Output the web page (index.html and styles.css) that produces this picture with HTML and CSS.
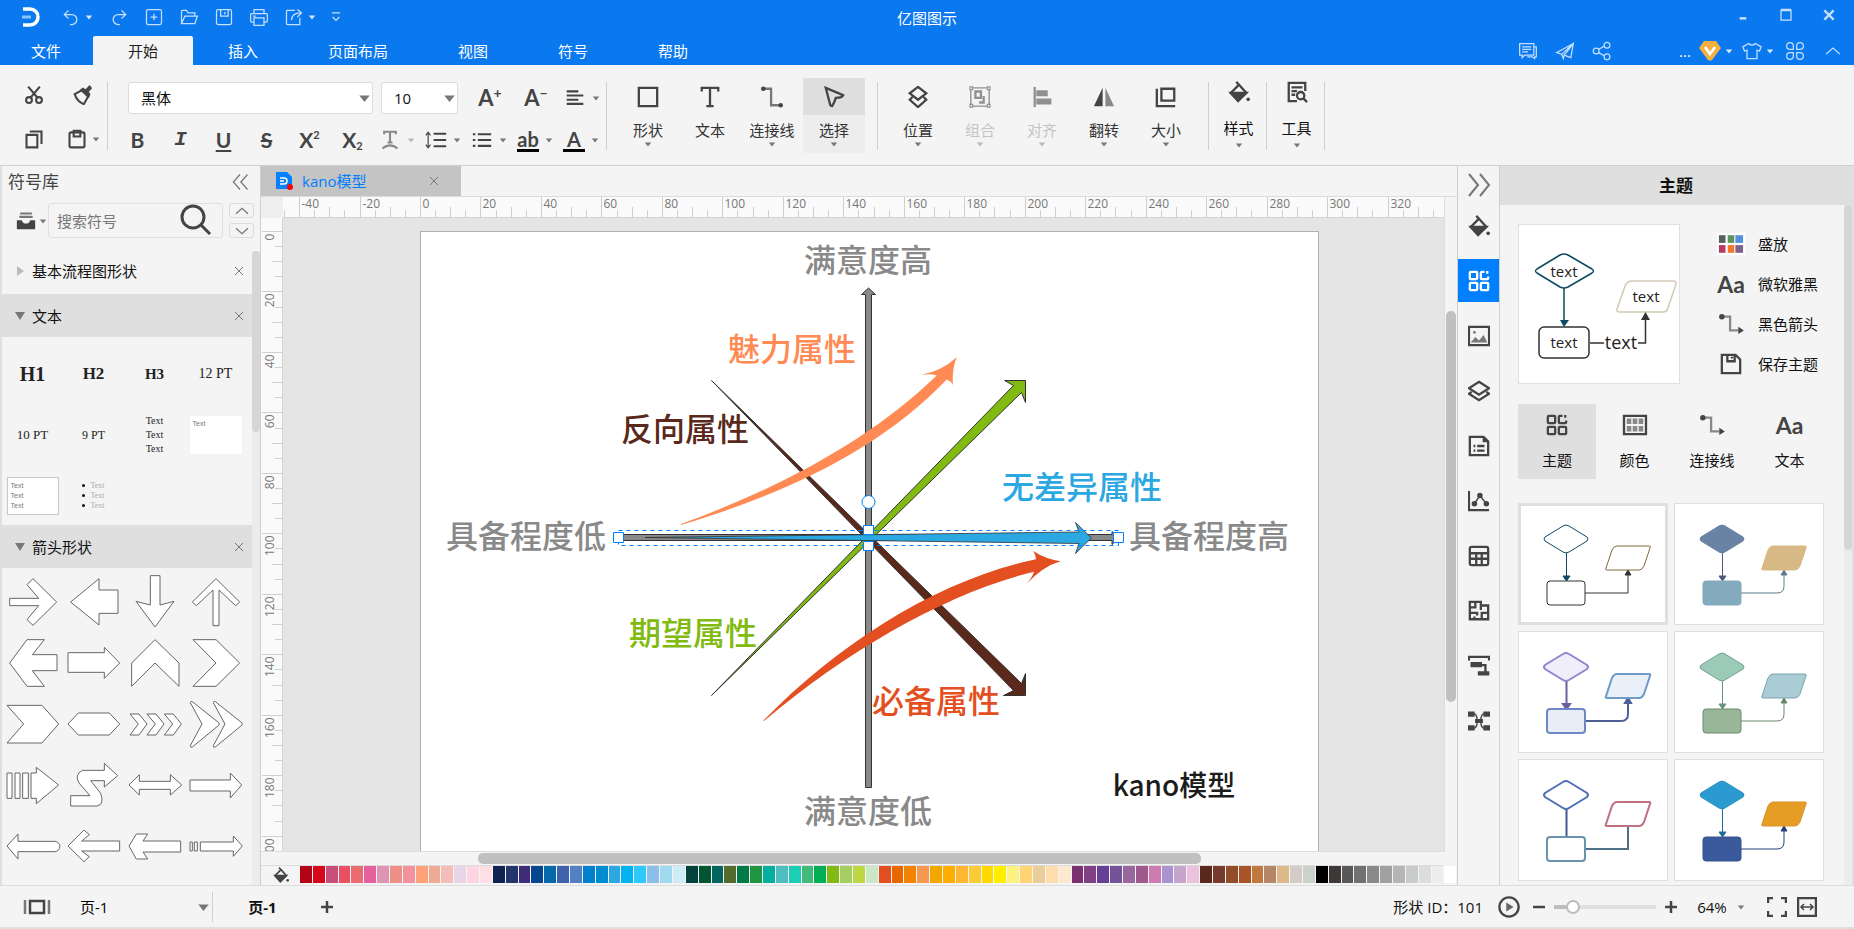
FILE: index.html
```html
<!DOCTYPE html>
<html lang="zh-CN">
<head>
  <meta charset="UTF-8" />
  <meta name="viewport" content="width=device-width, initial-scale=1" />
  <title>亿图图示</title>
  <link rel="stylesheet" href="styles.css">
</head>
<body>
  <!-- icon sprite -->
  <svg class="sprite" aria-hidden="true">
    <defs>
      <symbol id="i-caret" viewBox="0 0 10 10"><path d="M1 3h8L5 8z" fill="currentColor"/></symbol>
      <symbol id="i-close" viewBox="0 0 12 12"><path d="M2 2l8 8M10 2l-8 8"/></symbol>
      <symbol id="i-undo" viewBox="0 0 24 24"><path d="M9 4L4 9l5 5M4 9h9a6 6 0 0 1 0 12h-2"/></symbol>
      <symbol id="i-redo" viewBox="0 0 24 24"><path d="M15 4l5 5-5 5M20 9h-9a6 6 0 0 0 0 12h2"/></symbol>
      <symbol id="i-new" viewBox="0 0 24 24"><rect x="3" y="3" width="18" height="18" rx="2"/><path d="M12 8v8M8 12h8"/></symbol>
      <symbol id="i-open" viewBox="0 0 24 24"><path d="M3 20V5q0-1 1-1h5l2 3h8v4M3 20l4-9h15l-3 9z"/></symbol>
      <symbol id="i-save" viewBox="0 0 24 24"><rect x="3" y="3" width="18" height="18" rx="2"/><path d="M8 3v8h9V3M13 6v3"/></symbol>
      <symbol id="i-print" viewBox="0 0 24 24"><path d="M6 8V3h12v5M6 18H3q-1 0-1-1V9q0-1 1-1h18q1 0 1 1v8q0 1-1 1h-3M6 13h12v9H6zM5 11h3"/></symbol>
      <symbol id="i-export" viewBox="0 0 24 24"><path d="M13 4H4q-1 0-1 1v15q0 1 1 1h15v-8M9 16c0-6 4-9 11-9M16 3l5 4-5 5"/></symbol>
      <symbol id="i-more" viewBox="0 0 24 24"><path d="M7 7h10M8 12l4 4 4-4"/></symbol>
      <symbol id="i-min" viewBox="0 0 24 24"><path d="M8 16h8" stroke-width="3"/></symbol>
      <symbol id="i-max" viewBox="0 0 24 24"><path d="M6 6h12v12H6z"/><path d="M6 6h12" stroke-width="3"/></symbol>
      <symbol id="i-chat" viewBox="0 0 24 24"><path d="M2 3h17v14H8l-3 3v-3H2zM5 7h11M5 10h11M5 13h7M19 7h3v12h-2v2l-3-2h-6"/></symbol>
      <symbol id="i-plane" viewBox="0 0 24 24"><path d="M22 3L2 14l6 2L22 3l-3 17-8-3-1 4-2-5M11 17L22 3"/></symbol>
      <symbol id="i-share" viewBox="0 0 24 24"><circle cx="5" cy="12" r="3.500"/><circle cx="18" cy="5" r="3.500"/><circle cx="18" cy="19" r="3.500"/><path d="M8 10l7-4M8 14l7 4"/></symbol>
      <symbol id="i-shirt" viewBox="0 0 24 24"><path d="M8 3L1 7l2 5 3-1v10h12V11l3 1 2-5-7-4q-4 4-8 0z"/></symbol>
      <symbol id="i-petals" viewBox="0 0 24 24"><path d="M10 10H6a4 4 0 1 1 4-4zM14 10V6a4 4 0 1 1 4 4zM10 14v4a4 4 0 1 1-4-4zM14 14h4a4 4 0 1 1-4 4z"/></symbol>
      <symbol id="i-up" viewBox="0 0 24 24"><path d="M3 16l9-8 9 8"/></symbol>
      <symbol id="i-down" viewBox="0 0 24 24"><path d="M3 8l9 8 9-8"/></symbol>
      <symbol id="i-left2" viewBox="0 0 24 24"><path d="M12 3l-8 9 8 9M21 3l-8 9 8 9"/></symbol>
      <symbol id="i-right2" viewBox="0 0 24 24"><path d="M2 1l9 11-9 11M13 1l9 11-9 11"/></symbol>

      <symbol id="i-cut" viewBox="0 0 24 24"><circle cx="6" cy="18" r="3.500"/><circle cx="18" cy="18" r="3.500"/><path d="M5 2l11 13M19 2L8 15"/></symbol>
      <symbol id="i-brush" viewBox="0 0 24 24"><path d="M2 11l9-5 7 8-5 9q-8-3-11-12z"/><path d="M8 6l11 10 2-5-2-3 4-4-3-4-5 5-3-2z" fill="currentColor" stroke="none"/></symbol>
      <symbol id="i-copy" viewBox="0 0 24 24"><path d="M3 7h13v15H3z"/><path d="M7 3h14v15"/></symbol>
      <symbol id="i-paste" viewBox="0 0 24 24"><rect x="3" y="4" width="18" height="18" rx="2"/><path d="M8 2h8v7H8z"/></symbol>
      <symbol id="i-alignleft" viewBox="0 0 24 24"><path d="M2 4h14M2 9h20M2 14h14M2 19h20"/></symbol>
      <symbol id="i-spacing" viewBox="0 0 28 24"><path d="M11 4h16M11 12h16M11 20h16"/><path d="M4 2v20M1 6l3-4 3 4M1 18l3 4 3-4" stroke-width="1.500"/></symbol>
      <symbol id="i-bullets" viewBox="0 0 24 24"><path d="M7 5h16M7 12h16M7 19h16M1 5h3M1 12h3M1 19h3"/></symbol>
      <symbol id="i-shape" viewBox="0 0 24 24"><path d="M2 2h20v20H2z"/></symbol>
      <symbol id="i-text" viewBox="0 0 24 24"><path d="M3 6V2h18v4M12 2v20M8 22h8"/></symbol>
      <symbol id="i-line" viewBox="0 0 24 24"><path d="M3 3h8v18h10" stroke="#777"/><circle cx="2.500" cy="3" r="2.500" fill="currentColor" stroke="none"/><circle cx="21.500" cy="21" r="2.500" fill="currentColor" stroke="none"/></symbol>
      <symbol id="i-pointer" viewBox="0 0 24 24"><path d="M3 2l19 8q-1 3-8 3-2 6-4 9-1 0-2-1z"/></symbol>
      <symbol id="i-position" viewBox="0 0 24 24"><path d="M12 1l9 7-9 7-9-7zM6 12l-3 3 9 8 9-8-3-3"/></symbol>
      <symbol id="i-group" viewBox="0 0 24 24"><path d="M2 2h20v20H2z" stroke-width="1.500"/><path d="M1 1h3v3H1zM20 1h3v3h-3zM1 20h3v3H1zM20 20h3v3h-3z" fill="#f4f4f4" stroke-width="1.200"/><path d="M7 6h6v7H7zM16 11v7h-5"/></symbol>
      <symbol id="i-align" viewBox="0 0 24 24"><path d="M4 1v22"/><path d="M7 6h10v4H7zM7 15h14v4H7z" fill="currentColor"/></symbol>
      <symbol id="i-flip" viewBox="0 0 24 24"><path d="M10.500 2v20H1z" fill="currentColor" stroke="none"/><path d="M13.500 2v20H23z" fill="#888" stroke="none"/></symbol>
      <symbol id="i-size" viewBox="0 0 24 24"><path d="M7 3h14v13H7zM2 3v19h20"/></symbol>
      <symbol id="i-bucket" viewBox="0 0 24 24"><path d="M9 1l3 3-9 9 8 8 9-8-8-9"/><path d="M3 13h17l-9 9z" fill="currentColor"/><circle cx="22" cy="20" r="2" fill="currentColor" stroke="none"/></symbol>
      <symbol id="i-tools" viewBox="0 0 24 24"><path d="M12 22H3V2h18v9M6 7h12M6 11h6M6 15h4"/><circle cx="16" cy="16" r="4"/><path d="M19 19l4 4"/></symbol>
      <symbol id="i-library" viewBox="0 0 24 24"><path d="M5 3h14M4 7h16" stroke="#777"/><path d="M1 11h6q1 4 5 4t5-4h6v11H1z" fill="currentColor" stroke="none"/></symbol>
      <symbol id="i-search" viewBox="0 0 32 32"><circle cx="13" cy="13" r="11"/><path d="M21 21l9 9"/></symbol>

      <symbol id="i-theme" viewBox="0 0 24 24"><rect x="2" y="2" width="8" height="8" rx="1"/><path d="M18 2h-3q-1 0-1 1v6q0 1 1 1h6q1 0 1-1V7M21 1v3"/><rect x="2" y="14" width="8" height="8" rx="1"/><rect x="14" y="14" width="8" height="8" rx="1"/></symbol>
      <symbol id="i-image" viewBox="0 0 24 24"><path d="M1 2h22v20H1z"/><path d="M3 19l5-6 4 4 5-6 4 8z" fill="#777" stroke="none"/><circle cx="7" cy="8" r="1.500" fill="#777" stroke="none"/></symbol>
      <symbol id="i-layers" viewBox="0 0 24 24"><path d="M12 2l11 7-11 7L1 9zM4 13l-3 2 11 7 11-7-3-2"/></symbol>
      <symbol id="i-doc" viewBox="0 0 24 24"><path d="M2 2h15l5 5v15H2zM10 12h8M10 17h8M6 12h2M6 17h2"/><path d="M16 2v6h6z" fill="currentColor" stroke="none"/></symbol>
      <symbol id="i-chart" viewBox="0 0 24 24"><path d="M1 1v21h22"/><path d="M7 15l6-9 7 9" stroke-width="1.500"/><g fill="currentColor" stroke="none"><circle cx="7" cy="15" r="3"/><circle cx="13" cy="6" r="3"/><circle cx="20" cy="15" r="3"/></g></symbol>
      <symbol id="i-table" viewBox="0 0 24 24"><rect x="2" y="2" width="20" height="20" rx="2"/><path d="M2 9h20M2 15h20M9 9v13M15 9v13"/></symbol>
      <symbol id="i-plan" viewBox="0 0 24 24"><path d="M2 2h12v4h8v15H2zM8 2v6H2M14 6v5M2 14h8v3M7 21v-3M15 21v-7h7"/></symbol>
      <symbol id="i-gantt" viewBox="0 0 24 24"><path d="M1 6V2h22v4M14 11h5v9"/><path d="M4 9h10v3H4zM12 19h10v2H12z" fill="currentColor"/></symbol>
      <symbol id="i-mind" viewBox="0 0 24 24"><path d="M6 4q4 0 4 8t-4 8M18 4q-4 0-4 8t4 8M8 12h8" stroke-width="1.500"/><path d="M1 3h5v3H1zM18 3h5v3h-5zM1 18h5v3H1zM18 18h5v3h-5zM9 11h6v2H9z" fill="currentColor"/></symbol>
      <symbol id="i-arrowline" viewBox="0 0 28 24"><path d="M4 4h9v15h9" stroke="#888"/><circle cx="4" cy="4" r="3" fill="currentColor" stroke="none"/><path d="M22 15l6 4-6 4z" fill="currentColor" stroke="none"/></symbol>
      <symbol id="i-palette" viewBox="0 0 28 24"><path d="M2 2h24v20H2z"/><path d="M5 5h5v6H5zM11.500 5h5v6h-5zM18 5h5v6h-5zM5 13h5v6H5zM11.500 13h5v6h-5zM18 13h5v6h-5z" fill="#888" stroke="none"/></symbol>
      <symbol id="i-disk" viewBox="0 0 24 24"><path d="M2 2h15l5 5v15H2zM8 2v7h8V2M13 4v2"/></symbol>
      <symbol id="i-swatch" viewBox="0 0 26 20"><path fill="#fff" stroke="none" d="M0 0h26v20H0z"/><g stroke="none"><path fill="#566061" d="M2 2h6v7H2z"/><path fill="#5c9561" d="M10 2h6v7h-6z"/><path fill="#5290dc" d="M17 2h7v7h-7z"/><path fill="#b43c64" d="M2 11h6v7H2z"/><path fill="#f5782e" d="M10 11h6v7h-6z"/><path fill="#7d6189" d="M17 11h7v7h-7z"/></g></symbol>
      <symbol id="i-pages" viewBox="0 0 28 16"><path d="M7 2h14v12H7z" stroke-width="2.500"/><path d="M2 1v14M26 1v14" stroke="#777"/></symbol>
      <symbol id="i-play" viewBox="0 0 24 24"><circle cx="12" cy="12" r="10.500"/><path d="M9 7l8 5-8 5z" fill="#666" stroke="none"/></symbol>
      <symbol id="i-plus" viewBox="0 0 14 14"><path d="M7 1v12M1 7h12"/></symbol>
      <symbol id="i-minus" viewBox="0 0 14 14"><path d="M1 7h12"/></symbol>
      <symbol id="i-full" viewBox="0 0 20 20"><path d="M1 6V1h5M14 1h5v5M19 14v5h-5M6 19H1v-5"/></symbol>
      <symbol id="i-fit" viewBox="0 0 20 20"><path d="M1 1h18v18H1z"/><path d="M4 10h12M7 7l-3 3 3 3M13 7l3 3-3 3" stroke-width="1.500"/></symbol>
    </defs>
  </svg>

  <header class="titlebar">
    <div class="title-row">
      <div class="quick">
        <svg class="logo" viewBox="0 0 18 20"><path d="M1 2h7a8 8 0 0 1 0 16H1" fill="none" stroke="#fff" stroke-width="3.500"/><path d="M0 10h9" stroke="#8cc4ff" stroke-width="3"/></svg>
        <button class="q-drop" aria-label="撤销"><svg class="icon"><use href="#i-undo"/></svg><svg class="caret"><use href="#i-caret"/></svg></button>
        <button class="q-btn" aria-label="重做"><svg class="icon"><use href="#i-redo"/></svg></button>
        <button class="q-btn" aria-label="新建"><svg class="icon"><use href="#i-new"/></svg></button>
        <button class="q-btn" aria-label="打开"><svg class="icon"><use href="#i-open"/></svg></button>
        <button class="q-btn" aria-label="保存"><svg class="icon"><use href="#i-save"/></svg></button>
        <button class="q-btn" aria-label="打印"><svg class="icon"><use href="#i-print"/></svg></button>
        <button class="q-drop" aria-label="导出"><svg class="icon"><use href="#i-export"/></svg><svg class="caret"><use href="#i-caret"/></svg></button>
        <button class="q-more" aria-label="更多"><svg class="icon"><use href="#i-more"/></svg></button>
      </div>
      <div class="app-title">亿图图示</div>
      <div class="window-btns">
        <button aria-label="最小化"><svg class="icon"><use href="#i-min"/></svg></button>
        <button aria-label="最大化"><svg class="icon"><use href="#i-max"/></svg></button>
        <button aria-label="关闭"><svg class="icon small"><use href="#i-close"/></svg></button>
      </div>
    </div>
    <div class="tab-row">
      <nav class="menu">
        <a href="#" class="file">文件</a>
        <a href="#" class="active">开始</a>
        <a href="#">插入</a>
        <a href="#">页面布局</a>
        <a href="#">视图</a>
        <a href="#">符号</a>
        <a href="#">帮助</a>
      </nav>
      <div class="account">
        <button class="a-btn" aria-label="评论"><svg class="icon"><use href="#i-chat"/></svg></button>
        <button class="a-btn" aria-label="发送"><svg class="icon"><use href="#i-plane"/></svg></button>
        <button class="a-btn" aria-label="分享"><svg class="icon"><use href="#i-share"/></svg></button>
        <span class="user">...</span>
        <button class="a-drop" aria-label="会员"><svg class="vip" viewBox="0 0 22 20"><path d="M5 0h12l5 7-9 12q-2 1.500-4 0L0 7z" fill="#f5b041"/><path d="M6 6l5 7 5-7" fill="none" stroke="#fff" stroke-width="2.500"/></svg><svg class="caret"><use href="#i-caret"/></svg></button>
        <button class="a-drop" aria-label="皮肤"><svg class="icon"><use href="#i-shirt"/></svg><svg class="caret"><use href="#i-caret"/></svg></button>
        <button class="a-apps" aria-label="应用"><svg class="icon"><use href="#i-petals"/></svg></button>
        <button class="a-up" aria-label="收起"><svg class="icon"><use href="#i-up"/></svg></button>
      </div>
    </div>
  </header>

  <div class="ribbon">
    <div class="group clipboard">
      <button class="tool" aria-label="剪切"><svg class="icon"><use href="#i-cut"/></svg></button>
      <button class="tool" aria-label="格式刷"><svg class="icon"><use href="#i-brush"/></svg></button>
      <button class="tool" aria-label="复制"><svg class="icon"><use href="#i-copy"/></svg></button>
      <button class="tool paste" aria-label="粘贴"><svg class="icon"><use href="#i-paste"/></svg><svg class="caret"><use href="#i-caret"/></svg></button>
    </div>
    <div class="group font">
      <div class="font-row first">
        <label class="pick family"><select aria-label="字体"><option>黑体</option></select><svg class="pick-caret"><use href="#i-caret"/></svg></label>
        <label class="pick size"><select aria-label="字号"><option>10</option></select><svg class="pick-caret"><use href="#i-caret"/></svg></label>
        <button class="drop glyph-a">A<sup>+</sup></button>
        <button class="drop glyph-a">A<sup>−</sup></button>
        <button class="drop" aria-label="对齐"><svg class="icon"><use href="#i-alignleft"/></svg><svg class="caret"><use href="#i-caret"/></svg></button>
      </div>
      <div class="font-row">
        <button class="fmt bold">B</button>
        <button class="fmt italic">I</button>
        <button class="fmt under">U</button>
        <button class="fmt strike">S</button>
        <button class="fmt">X<sup>2</sup></button>
        <button class="fmt">X<sub>2</sub></button>
        <button class="drop off" aria-label="文字效果"><svg class="icon" viewBox="0 0 24 24"><path d="M5 5V2h14v3M12 2v13M9 15h6M3 22q9-7 18 0"/></svg><svg class="caret"><use href="#i-caret"/></svg></button>
        <button class="drop" aria-label="行距"><svg class="icon"><use href="#i-spacing"/></svg><svg class="caret"><use href="#i-caret"/></svg></button>
        <button class="drop" aria-label="项目符号"><svg class="icon"><use href="#i-bullets"/></svg><svg class="caret"><use href="#i-caret"/></svg></button>
        <button class="drop"><span class="ink">ab</span><svg class="caret"><use href="#i-caret"/></svg></button>
        <button class="drop"><span class="ink">A</span><svg class="caret"><use href="#i-caret"/></svg></button>
      </div>
    </div>
    <div class="group insert">
      <button class="big"><span class="pic"><svg class="icon"><use href="#i-shape"/></svg></span>形状<svg class="caret"><use href="#i-caret"/></svg></button>
      <button class="big"><span class="pic"><svg class="icon"><use href="#i-text"/></svg></span>文本</button>
      <button class="big"><span class="pic"><svg class="icon"><use href="#i-line"/></svg></span>连接线<svg class="caret"><use href="#i-caret"/></svg></button>
      <button class="big active"><span class="pic"><svg class="icon"><use href="#i-pointer"/></svg></span>选择<svg class="caret"><use href="#i-caret"/></svg></button>
    </div>
    <div class="group arrange">
      <button class="big"><span class="pic"><svg class="icon"><use href="#i-position"/></svg></span>位置<svg class="caret"><use href="#i-caret"/></svg></button>
      <button class="big off"><span class="pic"><svg class="icon"><use href="#i-group"/></svg></span>组合<svg class="caret"><use href="#i-caret"/></svg></button>
      <button class="big off"><span class="pic"><svg class="icon"><use href="#i-align"/></svg></span>对齐<svg class="caret"><use href="#i-caret"/></svg></button>
      <button class="big"><span class="pic"><svg class="icon"><use href="#i-flip"/></svg></span>翻转<svg class="caret"><use href="#i-caret"/></svg></button>
      <button class="big"><span class="pic"><svg class="icon"><use href="#i-size"/></svg></span>大小<svg class="caret"><use href="#i-caret"/></svg></button>
    </div>
    <div class="group single">
      <button class="big"><span class="pic"><svg class="icon"><use href="#i-bucket"/></svg></span>样式<svg class="caret"><use href="#i-caret"/></svg></button>
    </div>
    <div class="group single">
      <button class="big"><span class="pic"><svg class="icon"><use href="#i-tools"/></svg></span>工具<svg class="caret"><use href="#i-caret"/></svg></button>
    </div>
  </div>

  <main class="workspace">
    <aside class="library">
      <div class="lib-head">符号库<button aria-label="收起"><svg class="icon"><use href="#i-left2"/></svg></button></div>
      <div class="lib-search">
        <button class="lib-menu" aria-label="符号库菜单"><svg class="icon"><use href="#i-library"/></svg><svg class="caret"><use href="#i-caret"/></svg></button>
        <label class="search"><input type="text" placeholder="搜索符号" aria-label="搜索符号"><svg class="magnifier"><use href="#i-search"/></svg></label>
        <div class="steps">
          <button aria-label="上移"><svg><use href="#i-up"/></svg></button>
          <button aria-label="下移"><svg><use href="#i-down"/></svg></button>
        </div>
      </div>
      <div class="lib-body">
        <div class="lib-list">
          <div class="section closed"><svg class="tri" viewBox="0 0 10 10"><path d="M2 0l7 5-7 5z"/></svg>基本流程图形状<button aria-label="关闭"><svg><use href="#i-close"/></svg></button></div>
          <div class="section"><svg class="tri" viewBox="0 0 10 10"><path d="M0 1h10L5 9z"/></svg>文本<button aria-label="关闭"><svg><use href="#i-close"/></svg></button></div>
          <div class="shapes text-shapes">
            <div class="h1">H1</div>
            <div class="h2">H2</div>
            <div class="h3">H3</div>
            <div class="pt12">12 PT</div>
            <div class="pt10">10 PT</div>
            <div class="pt9">9 PT</div>
            <div class="lines">Text<br>Text<br>Text</div>
            <div><span class="note">Text</span></div>
            <div><span class="note framed">Text<br>Text<br>Text</span></div>
            <div><ul class="dots"><li>Text</li><li>Text</li><li>Text</li></ul></div>
          </div>
          <div class="section"><svg class="tri" viewBox="0 0 10 10"><path d="M0 1h10L5 9z"/></svg>箭头形状<button aria-label="关闭"><svg><use href="#i-close"/></svg></button></div>
          <div class="shapes arrow-shapes" id="arrows"></div>
        </div>
        <div class="lib-scroll"><div class="thumb"></div></div>
      </div>
    </aside>

    <section class="editor">
      <div class="doc-tabs">
        <div class="doc-tab">
          <svg class="doc-icon" viewBox="0 0 18 18"><path d="M1 0h10l5 5v12H1q-1 0-1-1V1q0-1 1-1z" fill="#007fff"/><path d="M4 6h4a3 3 0 0 1 0 6H4M4 9h4" fill="none" stroke="#fff" stroke-width="1.500"/><circle cx="14" cy="15" r="3" fill="#f00"/></svg>
          <a href="#">kano模型</a>
          <button aria-label="关闭"><svg><use href="#i-close"/></svg></button>
        </div>
      </div>
      <div class="stage">
        <div class="corner"></div>
        <svg class="ruler-h" id="rulerH"></svg>
        <svg class="ruler-v" id="rulerV"></svg>
        <div class="canvas">
          <div class="page">
            <svg class="diagram" viewBox="421 232 897 1268" width="897" height="1268">
              <g stroke="#333" fill="#898989">
                <path d="M865.500 787.500V294.500h-4l7-6.500 7 6.500h-4v493z"/>
                <path d="M620 534.500h492v-3l7 6.500-7 6.500v-4H620z"/>
                <path fill="#5a291b" d="M711.500 380.500L1021.500 683.500l4-10v22h-22l10-5z"/>
                <path fill="#81ba10" d="M711.500 695.500L1013.500 385.500l-9-5h21v22l-4-10z"/>
                <path fill="#2ba7e2" d="M645 537.500L1079 532l-3.500-9.500 16 15.500-16 15.500 3.500-10z" stroke-width=".8"/>
              </g>
              <path fill="#ff8a53" d="M681 524C780 488 870 440 936.700 375.500q-5-2-15.700-.8 20-3 35.700-17.400-5 12-3.700 27.700-2-4-6.300-5.500C880 449 790 492 681 525z"/>
              <path fill="#e34f20" d="M763.500 720.500C840 642 940 579 1036 559.300q0-4-2.700-8.300 12 8 27.400 10.300-18 5-34.400 23 6-7 7.700-12.600C950 592 850 648 764 721z"/>
              <g class="labels" text-anchor="middle">
                <text x="868" y="272" fill="#898989">满意度高</text>
                <text x="868" y="823" fill="#898989">满意度低</text>
                <text x="526" y="548" fill="#898989">具备程度低</text>
                <text x="1209" y="548" fill="#898989">具备程度高</text>
                <text x="792" y="361" fill="#ff8a53">魅力属性</text>
                <text x="685" y="441" fill="#5a291b">反向属性</text>
                <text x="1082" y="499" fill="#2ba7e2">无差异属性</text>
                <text x="693" y="645" fill="#81ba10">期望属性</text>
                <text x="936" y="713" fill="#e34f20">必备属性</text>
                <text x="1174" y="796" fill="#1c1c1c" class="name">kano模型</text>
              </g>
              <g stroke="#0080ff" fill="#fff">
                <path d="M618.500 530.500h500v15h-500z" fill="none" stroke-dasharray="4 4"/>
                <path d="M613.500 532.500h10v10h-10zM1113.500 532.500h10v10h-10zM863.500 525.500h10v9h-10zM863.500 541.500h10v9h-10z"/>
                <circle cx="868.500" cy="502" r="6.500"/>
              </g>
            </svg>
          </div>
        </div>
      </div>
      <div class="v-scroll"><div class="thumb"></div></div>
      <div class="h-scroll"><div class="thumb"></div></div>
      <div class="colors">
        <button class="fill-btn" aria-label="填充"><svg class="icon"><use href="#i-bucket"/></svg></button>
        <div class="swatches" id="swatches"></div>
      </div>
    </section>

    <nav class="dock">
      <button class="fold" aria-label="收起"><svg class="icon"><use href="#i-right2"/></svg></button>
      <button aria-label="填充"><svg class="icon"><use href="#i-bucket"/></svg></button>
      <button class="active" aria-label="主题"><svg class="icon"><use href="#i-theme"/></svg></button>
      <button aria-label="图片"><svg class="icon"><use href="#i-image"/></svg></button>
      <button aria-label="图层"><svg class="icon"><use href="#i-layers"/></svg></button>
      <button aria-label="备注"><svg class="icon"><use href="#i-doc"/></svg></button>
      <button aria-label="图表"><svg class="icon"><use href="#i-chart"/></svg></button>
      <button aria-label="表格"><svg class="icon"><use href="#i-table"/></svg></button>
      <button aria-label="平面图"><svg class="icon"><use href="#i-plan"/></svg></button>
      <button aria-label="甘特图"><svg class="icon"><use href="#i-gantt"/></svg></button>
      <button aria-label="思维导图"><svg class="icon"><use href="#i-mind"/></svg></button>
    </nav>

    <aside class="themes">
      <h2>主题</h2>
      <div class="themes-body">
        <div class="themes-main">
          <div class="current">
            <svg class="preview" viewBox="0 0 160 158">
              <g fill="none" stroke-width="1.500">
                <path stroke="#0d4a63" d="M41 30q4-2 8 0l24 14q3 2 0 4L49 62q-4 2-8 0L18 48q-3-2 0-4z"/>
                <path stroke="#0d4a63" d="M45 63v32"/>
                <rect stroke="#333" x="20" y="102" width="50" height="31" rx="5"/>
                <path stroke="#d3c9b6" d="M113 56h41q4 0 3 3l-8 24q-1 4-5 4h-43q-4 0-3-3l8-23q2-5 7-5z"/>
                <path stroke="#333" d="M71 118h14M119 118h7.500V94"/>
              </g>
              <path fill="#0d4a63" d="M41 95h9l-5 7z"/>
              <path fill="#333" d="M122 95h9l-4.500-8z"/>
              <g font-size="15" text-anchor="middle" fill="#222">
                <text x="45" y="52">text</text>
                <text x="127" y="77">text</text>
                <text x="45" y="123">text</text>
                <text x="102" y="124" font-size="18">text</text>
              </g>
            </svg>
            <div class="options">
              <button><svg class="icon"><use href="#i-swatch"/></svg>盛放</button>
              <button><span class="aa">Aa</span>微软雅黑</button>
              <button><svg class="icon"><use href="#i-arrowline"/></svg>黑色箭头</button>
              <button><svg class="icon disk"><use href="#i-disk"/></svg>保存主题</button>
            </div>
          </div>
          <div class="kinds">
            <button class="active"><svg class="icon"><use href="#i-theme"/></svg>主题</button>
            <button><svg class="icon"><use href="#i-palette"/></svg>颜色</button>
            <button><svg class="icon"><use href="#i-arrowline"/></svg>连接线</button>
            <button><span class="aa">Aa</span>文本</button>
          </div>
          <div class="cards" id="cards"></div>
        </div>
        <div class="themes-scroll"><div class="thumb"></div></div>
      </div>
    </aside>
  </main>

  <footer class="status">
    <button class="s-pages" aria-label="页面"><svg><use href="#i-pages"/></svg></button>
    <label class="page-pick"><select aria-label="页"><option>页-1</option></select><svg class="pick-caret"><use href="#i-caret"/></svg></label>
    <a href="#" class="page-tab">页-1</a>
    <button class="s-icon" aria-label="添加页"><svg><use href="#i-plus"/></svg></button>
    <span class="shape-id">形状 ID：101</span>
    <button class="s-play" aria-label="播放"><svg><use href="#i-play"/></svg></button>
    <button class="s-icon" aria-label="缩小"><svg><use href="#i-minus"/></svg></button>
    <input type="range" class="zoom" min="0" max="100" value="14" aria-label="缩放">
    <button class="s-icon" aria-label="放大"><svg><use href="#i-plus"/></svg></button>
    <button class="percent">64%<svg class="caret"><use href="#i-caret"/></svg></button>
    <button class="s-fit" aria-label="全屏"><svg><use href="#i-full"/></svg></button>
    <button class="s-fit" aria-label="适应宽度"><svg><use href="#i-fit"/></svg></button>
  </footer>

  <script src="app.js"></script>
</body>
</html>
```

FILE: styles.css
```css
* {
  box-sizing: border-box;
}
body {
  margin: 0;
  height: 100vh;
  display: flex;
  flex-direction: column;
  overflow: hidden;
  font-family: "Open Sans", "Noto Sans CJK SC", sans-serif;
  font-size: 15px;
  line-height: 20px;
  color: #111;
  background: #f4f4f4;
  border-bottom: 2px solid #dfdfdf;
}
button {
  border: 0;
  padding: 0;
  background: none;
  font: inherit;
  color: inherit;
  display: flex;
  align-items: center;
  justify-content: center;
  cursor: pointer;
}
a {
  color: inherit;
  text-decoration: none;
}
svg {
  display: block;
  flex: none;
}
.sprite {
  display: none;
}
.icon {
  width: 20px;
  height: 20px;
  fill: none;
  stroke: currentColor;
  stroke-width: 2.5;
}
.caret {
  width: 8px;
  height: 8px;
  color: #777;
}

/* title bar */
.titlebar {
  flex: none;
  height: 65px;
  background: #0a78ee;
  color: #fff;
}
.titlebar .icon {
  color: #c5e0ff;
  stroke-width: 1.5;
}
.titlebar .caret {
  color: #d8eaff;
}
.title-row {
  height: 36px;
  display: grid;
  grid-template-columns: 1fr auto 1fr;
}
.quick {
  display: flex;
  align-items: center;
  padding: 0 0 2px 22px;
}
.logo {
  width: 18px;
  height: 22px;
  margin-right: 13px;
}
.q-drop {
  width: 48px;
  gap: 4px;
}
.q-btn {
  width: 35px;
}
.q-more {
  width: 24px;
}
.app-title {
  line-height: 36px;
}
.window-btns {
  display: flex;
  justify-content: flex-end;
  padding: 0 4px 6px 0;
}
.window-btns button {
  width: 43px;
}
.window-btns .small {
  width: 14px;
  height: 14px;
  stroke-width: 2;
}
.tab-row {
  display: flex;
  justify-content: space-between;
}
.menu {
  display: flex;
}
.menu a {
  padding: 1px 35px 0;
  line-height: 28px;
}
.menu .file {
  padding: 1px 32px 0 31px;
}
.menu .active {
  background: #f4f4f4;
  color: #222;
  border-radius: 2px 2px 0 0;
}
.account {
  display: flex;
  align-items: center;
}
.a-btn {
  width: 37px;
}
.user {
  margin-left: 59px;
  width: 16px;
}
.a-drop {
  width: 42px;
  gap: 4px;
}
.vip {
  width: 22px;
  height: 20px;
}
.a-apps {
  width: 32px;
}
.a-up {
  width: 43px;
}
.a-up .icon {
  width: 18px;
}

/* ribbon */
.ribbon {
  flex: none;
  height: 101px;
  display: flex;
  padding-left: 2px;
  border-bottom: 1px solid #cfcfcf;
  color: #444;
}
.group {
  position: relative;
  display: flex;
  align-items: flex-start;
}
.group::after {
  content: "";
  position: absolute;
  right: 0;
  top: 17px;
  height: 68px;
  width: 1px;
  background: #cfcfcf;
}
.clipboard {
  width: 106px;
  padding: 8px 0 0 7px;
  display: grid;
  grid-template-columns: 50px 48px;
  grid-auto-rows: 44px;
  align-content: start;
  align-items: center;
}
.paste {
  gap: 5px;
}
.font {
  width: 499px;
  padding: 12px 0 0 8px;
  flex-direction: column;
}
.font-row {
  display: flex;
  height: 42px;
  align-items: center;
}
.font-row.first {
  padding-left: 12px;
}
.pick {
  position: relative;
  display: block;
}
.pick select {
  appearance: none;
  width: 100%;
  height: 32px;
  padding: 0 12px;
  border: 1px solid #dcdce0;
  border-radius: 3px;
  background: #fff;
  color: #111;
  font: inherit;
}
.pick-caret {
  position: absolute;
  right: 2px;
  top: 9px;
  width: 13px;
  height: 14px;
  color: #777;
  pointer-events: none;
}
.family {
  width: 245px;
  margin-right: 8px;
}
.size {
  width: 77px;
  margin-right: 9px;
}
.drop {
  width: 46px;
  gap: 6px;
}
.drop .icon {
  width: 22px;
}
.glyph-a {
  font: 700 22px/24px Lato, sans-serif;
  gap: 0;
}
.glyph-a sup {
  font-size: 14px;
  line-height: 14px;
  margin-bottom: 10px;
}
.fmt {
  width: 43px;
  font: 700 21px/24px Lato, sans-serif;
}
.fmt sup,
.fmt sub {
  font-size: 11px;
  line-height: 12px;
}
.fmt sup {
  margin-bottom: 10px;
}
.fmt sub {
  margin-top: 12px;
}
.italic {
  font-family: "Liberation Mono", monospace;
  font-style: italic;
}
.under {
  text-decoration: underline;
  text-underline-offset: 2px;
}
.strike {
  text-decoration: line-through;
}
.off,
.off .caret {
  color: #b8b8b8;
}
.off .icon {
  color: #888;
}
.ink {
  min-width: 22px;
  border-bottom: 3px solid #000;
  font: 700 20px/20px Lato, sans-serif;
}
.insert {
  width: 271px;
  padding: 13px 0 0 10px;
}
.arrange {
  width: 331px;
  padding: 13px 0 0 9px;
}
.single {
  width: 58px;
  padding: 9px 0 0 1px;
}
.big {
  width: 62px;
  height: 75px;
  flex-direction: column;
  justify-content: flex-start;
  border-radius: 2px;
  color: #333;
}
.big .pic {
  width: 100%;
  height: 37px;
  margin-bottom: 5px;
  display: flex;
  align-items: center;
  justify-content: center;
}
.big .icon {
  width: 24px;
  height: 22px;
  color: #444;
}
.big.active {
  background: #ededed;
}
.big.active .pic {
  background: #dfdfdf;
}
.big.off {
  color: #c4c4c4;
}
.big.off .icon {
  color: #909090;
}
.single .big {
  color: #111;
}
.single .pic {
  margin-bottom: 8px;
}
.single .caret {
  margin-top: 3px;
}

/* main area */
.workspace {
  flex: 1;
  min-height: 0;
  display: flex;
  border: solid #dfdfdf;
  border-width: 0 2px;
}

/* symbol library */
.library {
  flex: none;
  width: 259px;
  display: flex;
  flex-direction: column;
  border-right: 1px solid #cfcfcf;
}
.lib-head {
  height: 32px;
  display: flex;
  align-items: center;
  justify-content: space-between;
  padding: 0 10px 0 6px;
  font-size: 17px;
  color: #444;
}
.lib-head .icon {
  stroke-width: 1.5;
  color: #777;
}
.lib-search {
  display: flex;
  align-items: center;
  padding: 5px 0 13px 14px;
}
.lib-menu {
  width: 32px;
  justify-content: flex-start;
  gap: 3px;
  color: #444;
}
.search {
  position: relative;
  width: 175px;
}
.search input {
  width: 100%;
  height: 35px;
  padding: 0 8px;
  border: 1px solid #dfdfdf;
  border-radius: 3px;
  background: transparent;
  font: inherit;
}
.search input::placeholder {
  color: #777;
}
.magnifier {
  position: absolute;
  right: 11px;
  top: 1px;
  width: 32px;
  height: 32px;
  fill: none;
  stroke: #444;
  stroke-width: 3;
}
.steps {
  display: flex;
  flex-direction: column;
  gap: 5px;
  margin-left: 6px;
}
.steps button {
  width: 25px;
  height: 15px;
  border: 1px solid #dcdcdc;
  border-radius: 3px;
}
.steps svg {
  width: 20px;
  height: 16px;
  fill: none;
  stroke: #777;
  stroke-width: 2;
}
.lib-body {
  flex: 1;
  min-height: 0;
  display: flex;
}
.lib-list {
  width: 250px;
  overflow: hidden;
}
.section {
  height: 43px;
  display: flex;
  align-items: center;
  padding: 0 7px 0 13px;
  background: #dfdfdf;
}
.section.closed {
  background: none;
  padding-bottom: 4px;
}
.tri {
  width: 10px;
  height: 10px;
  margin-right: 7px;
  fill: #777;
}
.closed .tri {
  fill: #bbb;
}
.section button {
  margin-left: auto;
}
.section button svg,
.doc-tab button svg {
  width: 12px;
  height: 12px;
  stroke: #777;
}
.shapes {
  display: grid;
  grid-template-columns: repeat(4, 61px);
  grid-auto-rows: 61px;
}
.text-shapes {
  padding: 6px 0 0;
  font-family: "Liberation Serif", serif;
  color: #222;
  height: 188px;
}
.text-shapes > div {
  display: flex;
  align-items: center;
  justify-content: center;
}
.h1 {
  font-size: 20px;
  font-weight: 700;
}
.h2 {
  font-size: 17px;
  font-weight: 700;
}
.h3 {
  font-size: 15px;
  font-weight: 700;
}
.pt12 {
  font-size: 14px;
}
.pt10 {
  font-size: 13px;
}
.pt9 {
  font-size: 12px;
}
.lines {
  font-size: 10px;
  line-height: 14px;
}
.note {
  width: 52px;
  height: 38px;
  padding: 3px;
  background: #fff;
  font: 7px/10px "Liberation Sans", sans-serif;
  color: #777;
}
.framed {
  border: 1px solid #c8c8c8;
}
.dots {
  margin: 0;
  padding: 0;
  list-style: none;
  font-size: 8px;
  line-height: 10px;
  color: #aaa;
}
.dots li {
  display: flex;
  align-items: center;
  gap: 5px;
}
.dots li::before {
  content: "";
  width: 3px;
  height: 3px;
  border-radius: 50%;
  background: #111;
}
.arrow-shapes {
  padding: 4px 0 0 1px;
}
.arrow-shapes svg {
  width: 60px;
  height: 60px;
  fill: #fff;
  stroke: #666;
  stroke-width: 3;
}
.lib-scroll {
  width: 8px;
  background: #ececec;
}
.lib-scroll .thumb {
  height: 181px;
  border-radius: 4px;
  background: #d6d6d6;
}

/* editor */
.editor {
  flex: 1;
  min-width: 0;
  display: grid;
  grid-template-columns: 1fr 13px;
  grid-template-rows: 31px 1fr 14px 19px;
}
.doc-tabs {
  grid-column: 1 / 3;
  border-bottom: 1px solid #dcdcdc;
}
.doc-tab {
  width: 200px;
  height: 30px;
  padding: 0 21px 0 15px;
  display: flex;
  align-items: center;
  background: #c4c4c4;
  color: #007fff;
}
.doc-icon {
  width: 18px;
  height: 18px;
  margin-right: 8px;
}
.doc-tab button {
  margin-left: auto;
}
.stage {
  min-height: 0;
  min-width: 0;
  overflow-x: clip;
  display: grid;
  grid-template-columns: 22px 1fr;
  grid-template-rows: 21px 1fr;
  border-bottom: 1px solid #dcdcdc;
}
.corner {
  background: #efefef;
}
.ruler-h,
.ruler-v {
  width: 100%;
  height: 100%;
  background: #fafafa;
  font-size: 12px;
  fill: #777;
  stroke: none;
}
.ruler-h {
  overflow: visible;
  border-bottom: 1px solid #d4d4d4;
}
.ruler-v {
  overflow: hidden;
  border-right: 1px solid #d4d4d4;
}
.tick {
  stroke: #cfcfcf;
}
.canvas {
  overflow: hidden;
  background: #e4e4e4;
  padding: 13px 0 0 137px;
}
.page {
  width: 899px;
  height: 1270px;
  background: #fff;
  border: 1px solid #b0b0b0;
}
.labels {
  font: 500 32px "Noto Sans CJK SC", sans-serif;
}
.labels .name {
  font-size: 28px;
}
.v-scroll {
  padding: 114px 1px 0 1px;
  border-left: 1px solid #dcdcdc;
}
.v-scroll .thumb {
  width: 10px;
  height: 391px;
  border-radius: 5px;
  background: #c0c0c0;
}
.h-scroll {
  grid-column: 1 / 3;
  margin-right: 13px;
  padding: 1px 0 0 217px;
  border-bottom: 1px solid #dcdcdc;
}
.h-scroll .thumb {
  width: 723px;
  height: 11px;
  border-radius: 5px;
  background: #c0c0c0;
}
.colors {
  grid-column: 1 / 3;
  display: flex;
  align-items: flex-start;
}
.fill-btn {
  width: 39px;
  height: 17px;
  color: #444;
}
.fill-btn .icon {
  width: 16px;
  height: 16px;
}
.swatches {
  flex: 1;
  display: flex;
  gap: 1px;
}
.swatches button {
  flex: 1;
  height: 17px;
}

/* right dock */
.dock {
  flex: none;
  width: 43px;
  display: flex;
  flex-direction: column;
  gap: 12px;
  border: solid #cfcfcf;
  border-width: 0 1px;
  color: #444;
}
.dock button {
  height: 43px;
  flex: none;
}
.dock .fold {
  height: 38px;
  margin-bottom: -12px;
  color: #777;
}
.dock .icon {
  width: 22px;
  height: 22px;
}
.dock .fold .icon {
  width: 24px;
  height: 24px;
  stroke-width: 2;
}
.dock .active {
  background: #007fff;
  color: #fff;
}

/* theme panel */
.themes {
  flex: none;
  width: 352px;
  display: flex;
  flex-direction: column;
}
.themes h2 {
  margin: 0;
  font-size: 17px;
  line-height: 39px;
  text-align: center;
  background: #dfdfdf;
}
.themes-body {
  flex: 1;
  min-height: 0;
  display: flex;
}
.themes-main {
  flex: 1;
  overflow: hidden;
  padding: 19px 20px 0 18px;
}
.themes-scroll {
  width: 8px;
  background: #ececec;
}
.themes-scroll .thumb {
  height: 345px;
  border-radius: 4px;
  background: #d6d6d6;
}
.current {
  display: flex;
}
.preview {
  width: 162px;
  height: 160px;
  border: 1px solid #dfdfdf;
  background: #fff;
}
.options {
  margin-left: 36px;
}
.options button {
  height: 40px;
  gap: 12px;
}
.options .icon,
.kinds .icon,
.aa {
  width: 30px;
  height: 22px;
  color: #444;
}
.aa {
  font: 700 23px/22px Lato, sans-serif;
}
.kinds {
  display: grid;
  grid-template-columns: 78px 77px 78px 77px;
  margin-top: 20px;
}
.kinds button {
  height: 75px;
  flex-direction: column;
  gap: 14px;
}
.kinds .active {
  background: #dfdfdf;
}
.cards {
  display: grid;
  grid-template-columns: 150px 150px;
  gap: 6px;
  margin-top: 24px;
}
.cards button {
  height: 122px;
  border: 1px solid #dfdfdf;
  background: #fff;
}
.cards .active {
  border-width: 3px;
}
.cards svg {
  width: 144px;
  height: 116px;
}

/* status bar */
.status {
  flex: none;
  height: 42px;
  display: flex;
  align-items: center;
  padding: 0 32px 0 23px;
  border-top: 1px solid #dcdcdc;
}
.status svg {
  fill: none;
  stroke: #444;
  stroke-width: 2.5;
}
.s-pages svg {
  width: 28px;
  height: 16px;
}
.page-pick {
  position: relative;
  width: 162px;
  height: 30px;
  padding-left: 29px;
  border-right: 1px solid #cfcfcf;
}
.page-pick select {
  appearance: none;
  width: 100%;
  height: 30px;
  border: 0;
  padding: 0;
  background: transparent;
  font: inherit;
}
.status .pick-caret {
  top: 8px;
  stroke: none;
}
.page-tab {
  width: 99px;
  text-align: center;
  font-weight: 700;
}
.s-icon {
  width: 30px;
}
.s-icon svg {
  width: 14px;
  height: 14px;
}
.shape-id {
  margin-left: auto;
  margin-right: 15px;
}
.s-play svg {
  width: 22px;
  height: 22px;
}
.s-play {
  margin-right: 4px;
}
.zoom {
  appearance: none;
  width: 102px;
  height: 16px;
  margin: 0;
  background: linear-gradient(#bdbdbd, #bdbdbd) left center / 14px 4px no-repeat,
    linear-gradient(#dfdfdf, #dfdfdf) center / 100% 4px no-repeat;
}
.zoom::-webkit-slider-thumb {
  appearance: none;
  width: 14px;
  height: 14px;
  border: 2px solid #bdbdbd;
  border-radius: 50%;
  background: #fff;
}
.percent {
  width: 64px;
  padding-left: 6px;
  gap: 10px;
  margin-right: 12px;
}
.percent .caret {
  stroke: none;
}
.s-fit {
  width: 30px;
}
.s-fit svg {
  width: 20px;
  height: 20px;
}
```

FILE: app.js
```js
const arrows = [
  'M-70-11H17L-18-52 0-70 71 0 0 70-18 53 17 11H-70z',
  'M-70 0L15-70V-36H72V34H15V69z',
  'M-14-79H15V9L57-2 0 75-57-2-14 9z',
  'M0-70L71 0 59 11 9-36V71H-9V-36L-59 11-71 0z',
  'M-70 0L-18-70H34L-2-25H72V23H-2L34 70H-18z',
  'M-78-31H31V-47L77 0 31 46V28H-78z',
  'M0-70L72 0V70L0 0-70 70V0z',
  'M-69-70H0L71 0 0 70H-69L0 0z',
  'M-78-56H27L77 0 27 57H-78L-28 0z',
  'M-78 0L-47-33H46L77 0 46 33H-47z',
  'M-75-30h27l24 30-24 33h-27l25-33zM-24-30H3L27 0 3 33h-27L1 0zM28-30h27L79 0 55 33H28L53 0z',
  'M-77-64Q-76-70-71-67L8-4Q12 0 8 4L-71 69Q-77 72-77 65L-42 0zM-8-64Q-7-70-2-67L77-4Q81 0 77 4L-2 69Q-8 72-8 65L27 0z',
  'M-78-36h15v76h-15zM-54-36h15v76h-15zM-31-36h17v76h-17zM-6-36h16v-17L77 0 10 56V40H-6z',
  'M-70 63V32H-12L-45-6Q-60-30-35-44H31V-65L71-28 31 6V-13H-10L20 25Q32 58 10 63z',
  'M-78 0l31-31v20h93v-20L80 0 46 30V13h-93v17z',
  'M-78-15H43V-36L77 0 43 39V18H-78z',
  'M-78 0l33-36v22H65a15 15 0 0 1 0 31H-45v22z',
  'M-78 0l48-48 16 14-23 19H77v30H-37l23 17-16 15z',
  'M-78 0l22-36h34l-14 21H77v33H-36l14 21h-34z',
  'M-78-12h7v27h-7zM-65-12h9v27h-9zM-47-12H52V-30L79 0 52 31V15H-47z',
];

const colors = `b20414 d8071c c74f79 ea5064 ea6b70 e65f9f e094b4 ee8f88 f2929c ffa27a efaa94 f4bdb9 ead5e8 ffd5e4 ffdfe3
10224f 22366c 3f2c78 05478e 0568a8 3f62af 5380c3 0080ce 008cd0 2ba7e2 02b3f1 2fc8fb 8bbfea a0daee ceebf6
02423a 005631 02665f 546b2e 007a47 1f963f 03b0a0 50bdc0 1bceb4 43b97a 01af56 81ba10 a4ce60 bdd742 cce7c8
e34f20 ec6600 f28200 f49852 f2a700 ffae00 ffb733 f9cb34 ffd900 ffee00 fcf282 ffd475 ebcd99 ffdcab fce8ce
7b3171 833f85 673f97 755399 98679e 9d598b cd7bb0 a994cf c5a5cb ecc1db
5a291b 763b2e 924c28 a85426 c0783d b6866b deb887 d4ccc7 c9d3cb
000000 3e3838 595757 717171 898989 9fa0a0 b5b5b6 c9caca dcdddd ededed ffffff`.split(/\s+/);

// d = diamond, r = rectangle, p = parallelogram: [fill, stroke]
const themes = [
  { d: ['#fff', '#0d4a63'], r: ['#fff', '#333'], p: ['#fff', '#806a38'], down: '#0d4a63', side: '#333', w: 1 },
  { d: ['#6983a5', '#6983a5'], r: ['#84aabd', '#84aabd'], p: ['#d8b985', '#d8b985'], down: '#4b5b78', side: '#5b7c8a', w: 1, round: true },
  { d: ['#efeefa', '#8f86cc'], r: ['#e9edf8', '#6f87c6'], p: ['#eaf0f9', '#6f9bc8'], down: '#6a609c', side: '#4f6096', w: 2, round: true },
  { d: ['#9ccab9', '#73a08f'], r: ['#98b698', '#6c8c6c'], p: ['#a9ccd5', '#7da3ae'], down: '#6b9181', side: '#67856b', w: 1, round: true },
  { d: ['#fff', '#4f70b4'], r: ['#fff', '#6a93ad'], p: ['#fff', '#bd7181'], down: '#41568d', side: '#4f7188', w: 2, bare: true },
  { d: ['#2a9ad0', '#2a8fc2'], r: ['#3a5a9b', '#35528f'], p: ['#e59d26', '#d8922a'], down: '#1f6d92', side: '#27407a', w: 1, round: true },
];

const SVG = 'http://www.w3.org/2000/svg';
const STEP = 3.0236; // pixels per millimetre at this zoom

function drawRuler(el, vertical, origin, from, to) {
  let out = '';
  for (let mm = from; mm <= to; mm += 5) {
    const pos = Math.round(origin + mm * STEP) - 0.5;
    const size = mm % 20 === 0 ? 21 : mm % 10 === 0 ? 11 : 8;
    out += vertical
      ? `<path class="tick" d="M22 ${pos}h-${size}"/>`
      : `<path class="tick" d="M${pos} 21v-${size}"/>`;
    if (mm % 20 === 0) {
      out += vertical
        ? `<text transform="translate(13 ${pos + 2}) rotate(-90)" text-anchor="end">${mm}</text>`
        : `<text x="${pos + 2}" y="11">${mm}</text>`;
    }
  }
  el.innerHTML = out;
}

function themeCard(t, index) {
  const turn = t.round ? 'M64 87h36q7 0 7-7V64' : 'M64 87h43V64';
  const heads = t.bare ? '' : `
    <path d="M42 70h7l-3.500 5z" fill="${t.down}" stroke="${t.down}"/>
    <path d="M104 69h6l-3-5z" fill="${t.side}" stroke="${t.side}"/>`;
  const card = document.createElement('button');
  card.className = index === 0 ? 'active' : '';
  card.setAttribute('aria-label', '主题 ' + (index + 1));
  card.innerHTML = `<svg viewBox="0 0 144 116" fill="none" stroke-width="${t.w}">
    <path d="M45.500 46v29" stroke="${t.down}"/>
    <path d="${turn}" stroke="${t.side}"/>${heads}
    <path d="M42 20q3-2 6 0l18 11q2 2 0 4L48 46q-3 2-6 0L24 35q-2-2 0-4z" fill="${t.d[0]}" stroke="${t.d[1]}"/>
    <rect x="26" y="75" width="38" height="24" rx="3" fill="${t.r[0]}" stroke="${t.r[1]}"/>
    <path d="M96 40h32q2 0 1 2l-6 18q-2 4-5 4H86q-2 0-1-2l6-18q2-4 5-4z" fill="${t.p[0]}" stroke="${t.p[1]}"/>
  </svg>`;
  return card;
}

arrows.forEach((d) => {
  const svg = document.createElementNS(SVG, 'svg');
  svg.setAttribute('viewBox', '-90 -90 180 180');
  svg.innerHTML = `<path d="${d}"/>`;
  document.getElementById('arrows').appendChild(svg);
});

colors.forEach((hex) => {
  const swatch = document.createElement('button');
  swatch.style.background = '#' + hex;
  swatch.setAttribute('aria-label', '#' + hex);
  document.getElementById('swatches').appendChild(swatch);
});

themes.forEach((t, i) => document.getElementById('cards').appendChild(themeCard(t, i)));

drawRuler(document.getElementById('rulerH'), false, 138, -45, 335);
drawRuler(document.getElementById('rulerV'), true, 14, 0, 200);
```
